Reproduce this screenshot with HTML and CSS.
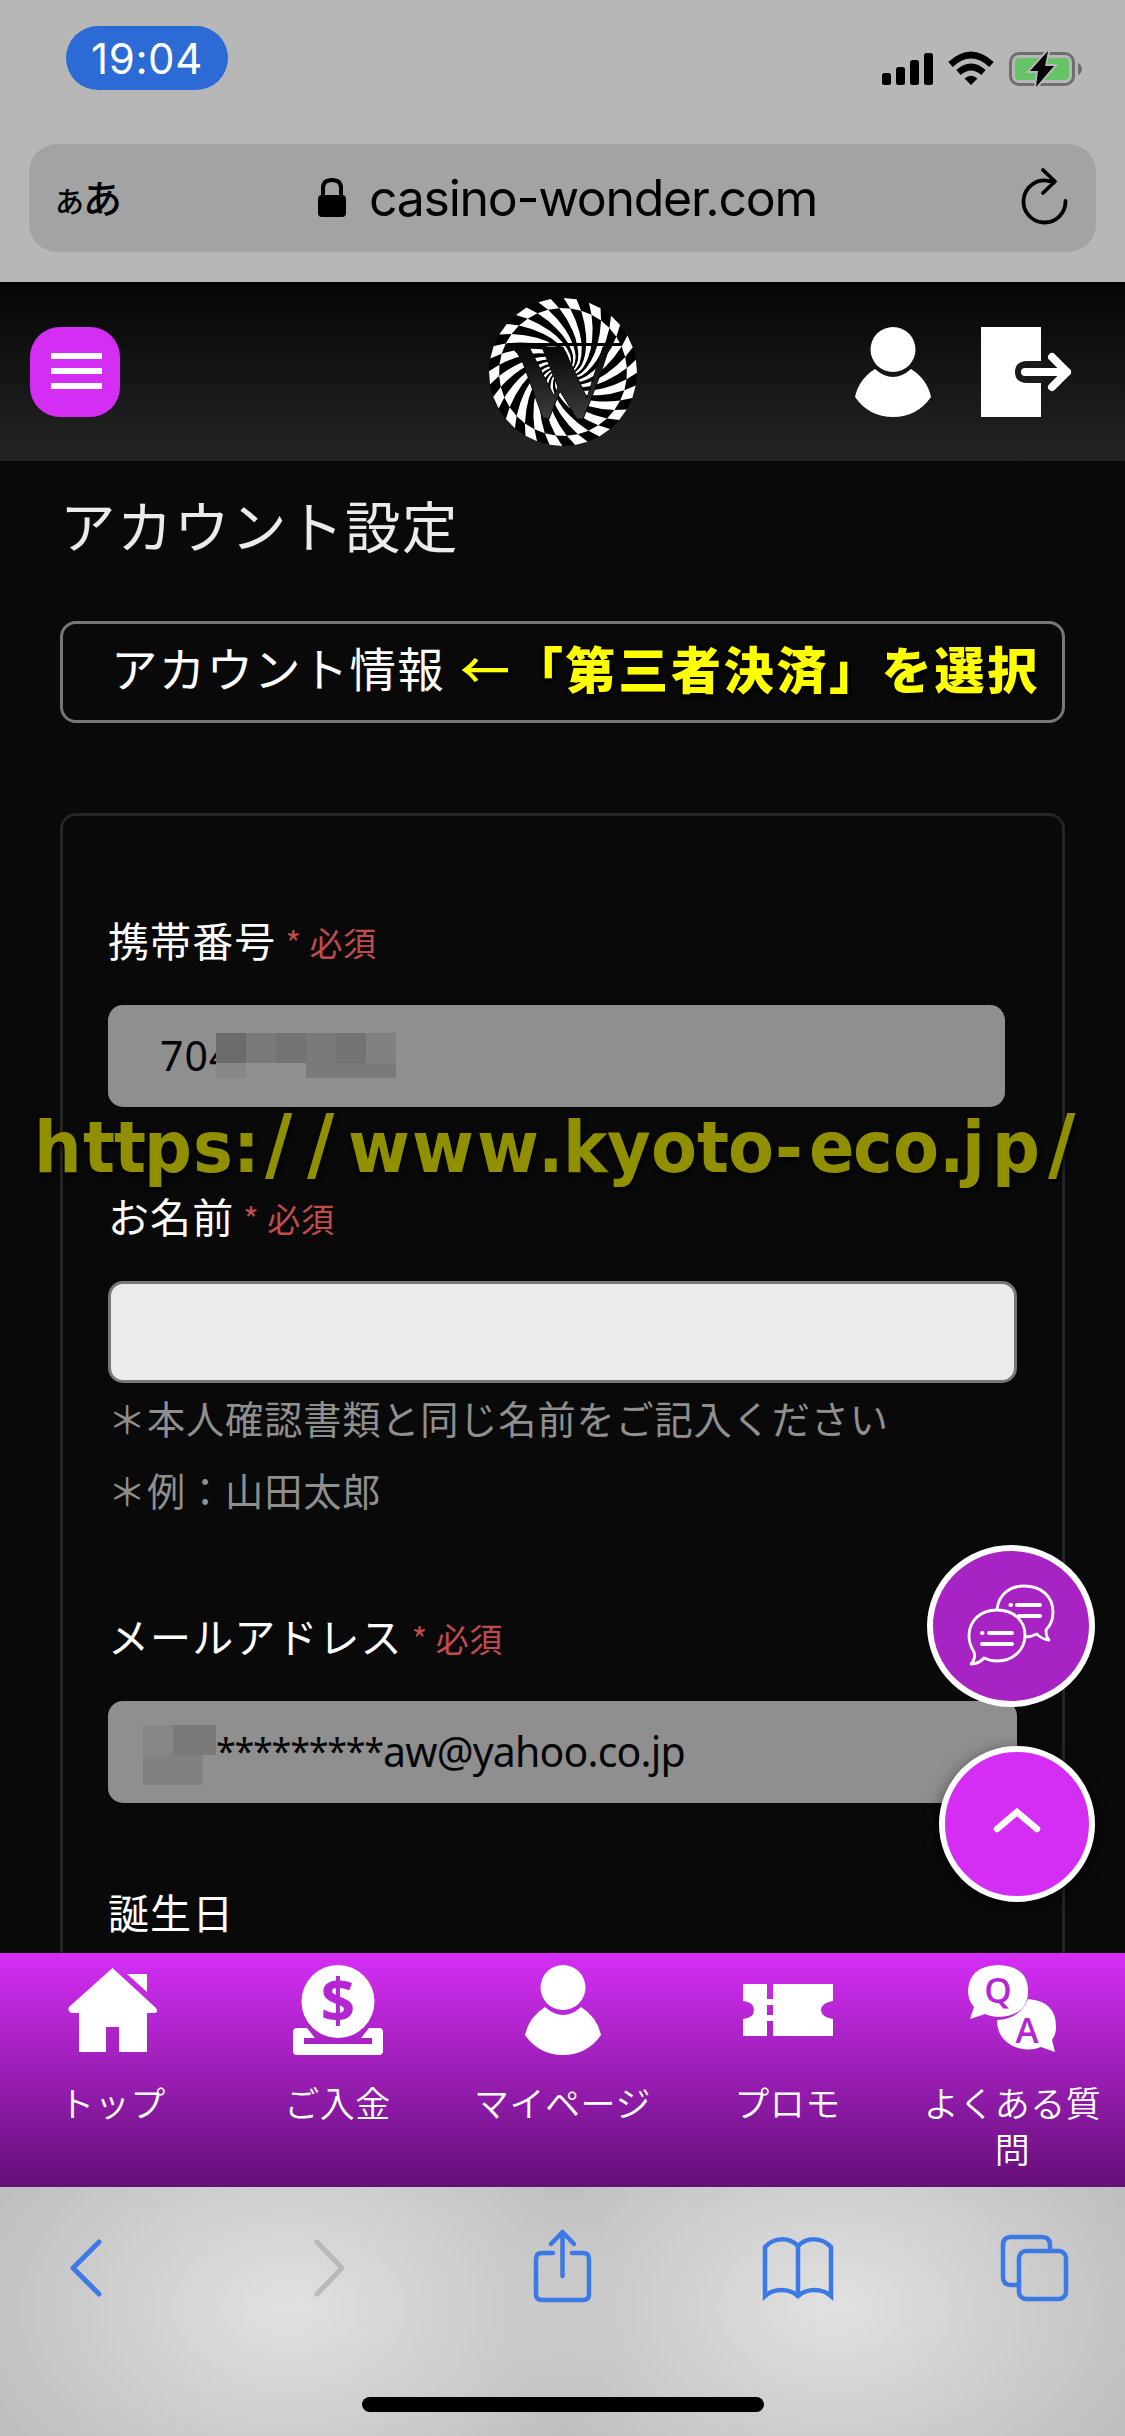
FILE: index.html
```html
<!DOCTYPE html>
<html lang="ja">
<head>
<meta charset="utf-8">
<title>アカウント設定</title>
<link rel="stylesheet" href="styles.css">
</head>
<body>
<div class="screen">
  <div class="browser-top">
    <div class="status">
      <span class="clock">19:04</span>
      <svg class="status-icons" width="202" height="36" viewBox="0 0 202 36">
        <rect x="0" y="21" width="9" height="12" rx="2.5"/><rect x="14" y="15" width="9" height="18" rx="2.5"/><rect x="28" y="8" width="9" height="25" rx="2.5"/><rect x="42" y="1" width="9" height="32" rx="2.5"/>
        <path d="M89 33 L82.500 26.500 Q89 21 95.500 26.500Z"/>
        <path d="M76.500 20.500 Q89 9.500 101.500 20.500" fill="none" stroke="#000" stroke-width="6.500"/>
        <path d="M68.500 12.500 Q89 -6.500 109.500 12.500" fill="none" stroke="#000" stroke-width="6.500"/>
        <rect x="128.500" y="1.500" width="63" height="31" rx="8.500" fill="none" stroke="#6f6f6f" stroke-width="3"/>
        <rect x="133" y="6" width="54" height="22" rx="4.500" fill="#65c466"/>
        <path d="M196 11 Q200 13 200 17 Q200 21 196 23Z" fill="#6f6f6f"/>
        <path d="M166 -1 L148 19 H156 L154 35 L172 14 H163Z" stroke="#b7b7b7" stroke-width="4" paint-order="stroke"/>
      </svg>
    </div>
    <div class="address">
      <span class="reader"><small>あ</small>あ</span>
      <span class="domain">
        <svg width="28" height="40" viewBox="0 0 28 40"><rect x="0" y="17" width="28" height="22" rx="4"/><path d="M5 18 V10 Q5 2 14 2 T23 10 V18" fill="none" stroke="#000" stroke-width="4"/></svg>
        casino-wonder.com
      </span>
      <svg class="reload" width="46" height="56" viewBox="0 0 46 56"><path d="M27 13 A21 21 0 1 0 43.500 33 M21 2 L33 13.500 L21 25 M26 13 H32" fill="none" stroke="#000" stroke-width="3.800" stroke-linecap="round" stroke-linejoin="round"/></svg>
    </div>
  </div>

  <header class="site-header">
    <button class="menu"><i></i><i></i><i></i></button>
    <svg class="logo" width="150" height="150" viewBox="-75 -75 150 150">
      <defs>
        <g id="ray" fill="#fff">
          <path d="M64 0 Q53 7.500 41.300 11.900 Q33 15 25.400 15.900 Q17 17 10.900 15.600 Q3 13 0 8 L-1.400 7.900 Q.7 13.300 8 17.200 Q13.800 19.700 22.300 20.100 Q29.900 20.500 38.600 18.900 Q50.900 16.600 63 11.100Z"/>
          <path d="M63 11.100 L60.100 21.900 L71.800 17.900 L73.800 5.200Z"/>
        </g>
        <linearGradient id="w" x1="0" y1="0" x2="0" y2="1"><stop offset="0" stop-color="#050505"/><stop offset="1" stop-color="#3c3c3c"/></linearGradient>
      </defs>
      <circle r="74"/>
      <g transform="rotate(6.500)">
        <use href="#ray"/><use href="#ray" transform="rotate(20)"/><use href="#ray" transform="rotate(40)"/><use href="#ray" transform="rotate(60)"/><use href="#ray" transform="rotate(80)"/><use href="#ray" transform="rotate(100)"/>
        <use href="#ray" transform="rotate(120)"/><use href="#ray" transform="rotate(140)"/><use href="#ray" transform="rotate(160)"/><use href="#ray" transform="rotate(180)"/><use href="#ray" transform="rotate(200)"/><use href="#ray" transform="rotate(220)"/>
        <use href="#ray" transform="rotate(240)"/><use href="#ray" transform="rotate(260)"/><use href="#ray" transform="rotate(280)"/><use href="#ray" transform="rotate(300)"/><use href="#ray" transform="rotate(320)"/><use href="#ray" transform="rotate(340)"/>
      </g>
      <path d="M-55 -27.500 H58" stroke="#000" stroke-width="3"/>
      <path d="M-53 -26 L-34 -25 L-9 24 L-5 15 L-21 -25 L0 -25 L24 26 L40 -25 L49 -26 L45 -21 Q36 8 20 47 L14 47 L-3 19 L-14 47 L-20 46 L-40 -9 Q-45 -20 -53 -26Z" fill="url(#w)" stroke="#080808" stroke-width="1"/>
    </svg>
    <div class="header-links">
      <svg width="76" height="90" viewBox="0 0 76 90" fill="#fff"><ellipse cx="38" cy="22.500" rx="22.500" ry="22.500"/><path d="M20 42 Q38 58 56 42 Q72 52 76 70 Q62 90 38 90 Q14 90 0 70 Q4 52 20 42Z"/></svg>
      <svg width="90" height="90" viewBox="0 0 90 90"><rect width="60" height="90" fill="#fff"/><path d="M60 34 H47 Q34 34 34 45 Q34 56 47 56 H60Z" fill="#1b1b1b"/><path d="M44 45 H86 M71 30 L86 45 L71 60" fill="none" stroke="#fff" stroke-width="8" stroke-linecap="round" stroke-linejoin="round"/></svg>
    </div>
  </header>

  <main class="content">
    <h1>アカウント設定</h1>
    <div class="section-bar"><span>アカウント情報</span><b class="note"><em>←</em>「第三者決済」を選択</b></div>
    <form class="card">
      <label>携帯番号<span class="req">* 必須</span></label>
      <div class="field phone">704<div class="mosaic mosaic-phone"><i class="a"></i><i class="b"></i><i class="c"></i><i class="b"></i><i class="c"></i><i class="d"></i><i class="e"></i><i></i><i></i><i class="b"></i><i class="b"></i><i class="b"></i></div></div>
      <label>お名前<span class="req">* 必須</span></label>
      <div class="field editable"></div>
      <p class="hint">＊本人確認書類と同じ名前をご記入ください<br>＊例：山田太郎</p>
      <label>メールアドレス<span class="req">* 必須</span></label>
      <div class="field mail"><span class="mosaic mosaic-mail"><i></i><i class="b"></i><i class="d"></i></span><span class="stars">*********</span><span>aw@yahoo.co.jp</span></div>
      <label>誕生日</label>
    </form>
    <svg class="watermark" width="1125" height="110"><text transform="scale(1 1.070)" y="67.300" x="34 83 114 144 193 233 265 307 348 412 477 538 563 607 651 697 728 775 809 853 893 939 962 992 1048">https:<tspan class="slash">//</tspan>www.kyoto-eco.jp<tspan class="slash">/</tspan></text></svg>
  </main>

  <nav class="tabs">
    <a><svg width="90" height="90" viewBox="0 0 90 90" fill="#fff"><path d="M44.500 3 L88 43 Q91 48 86 48 H79 V87 H51 V62 H38 V87 H11 V48 H4 Q-1 47 1 42Z"/><path d="M59 9 H79 V27Z"/></svg>トップ</a>
    <a><svg width="90" height="90" viewBox="0 0 90 90"><path d="M0 67 Q0 63 4 63 H14 L22 73 H11 V79 H79 V73 H68 L76 63 H86 Q90 63 90 67 V86 Q90 90 86 90 H4 Q0 90 0 86Z" fill="#fff"/><circle cx="45" cy="36.500" r="36.500" fill="#fff"/><text class="dollar" x="45" y="57" text-anchor="middle">$</text></svg>ご入金</a>
    <a><svg width="76" height="90" viewBox="0 0 76 90" fill="#fff"><circle cx="38" cy="22.500" r="22.500"/><path d="M20 42 Q38 58 56 42 Q72 52 76 70 Q62 90 38 90 Q14 90 0 70 Q4 52 20 42Z"/></svg>マイページ</a>
    <a><svg width="90" height="90" viewBox="0 0 90 90" fill="#fff"><path fill-rule="evenodd" d="M0 19 H24 V34 H30 V19 H90 V36 Q78 38 78 45 Q78 52 90 54 V71 H30 V56 H24 V71 H0 V54 Q11 53 11 45 Q11 37 0 36Z M24 40 H30 V50 H24Z"/></svg>プロモ</a>
    <a><svg width="90" height="90" viewBox="0 0 90 90"><path d="M60 34 Q88 36 88 62 Q88 70 84 75 L87 87 L73 82 Q58 88 43 80 Q29 72 29 55 Q52 54 60 34Z" fill="#fff"/><path d="M30 0 Q60 1 60 26 Q60 51 30 52 Q23 52 17 49 L2 54 L6 42 Q0 35 0 26 Q1 1 30 0Z" fill="#fff"/><text class="qa" x="30" y="38" text-anchor="middle">Q</text><text class="qa" x="59" y="78" text-anchor="middle">A</text></svg>よくある質問</a>
  </nav>

  <footer class="browser-bottom">
    <svg width="1125" height="249" viewBox="0 0 1125 249" fill="none" stroke="#3b79e5" stroke-width="4.500" stroke-linecap="round" stroke-linejoin="round">
      <path d="M99 55 L73 81 L99 107" stroke-width="5"/><path d="M317 55 L342 81 L317 107" stroke="#b9b9b9" stroke-width="5"/>
      <path d="M553 66 H542 Q536 66 536 72 V107 Q536 113 542 113 H583 Q589 113 589 107 V72 Q589 66 583 66 H572 M562.500 89 V46 M551 57 L562.500 45 L574 57"/>
      <path d="M765 60 C774 50 789 50 798 59 C807 50 822 50 831 60 V109 C822 101 807 101 798 109 C789 101 774 101 765 109Z M798 59 V109" stroke-linejoin="miter"/>
      <path d="M1050 64 V58 Q1050 50 1042 50 H1011 Q1003 50 1003 58 V90 Q1003 98 1011 98 H1017"/><rect x="1019" y="64" width="47" height="48" rx="7"/>
    </svg>
    <i class="home-bar"></i>
  </footer>

  <a class="float chat"><svg width="88" height="84" viewBox="0 0 88 84" fill="none" stroke="#fff" stroke-width="2.800" stroke-linecap="round" stroke-linejoin="round"><path d="M30 25 C32 10 43 2 57 2 C75 2 86 13 86 28 C86 36 83 42 79 46 Q79 53 82 56 Q74 55 70 50 Q64 53 58 53"/><path d="M30 26 C47 26 58 37 58 51 C58 66 46 77 30 77 Q23 77 17 74 Q12 80 4 80 Q9 75 7 68 Q2 60 2 52 C2 37 13 26 30 26Z"/><path d="M43.500 21 H44 M50 21 H73 M52 32 H73 M15 49 H15.500 M22 49 H45 M15 60 H45" stroke-width="4"/></svg></a>
  <a class="float to-top"><svg width="50" height="30" viewBox="0 0 50 30"><path d="M5 24 L25 7 L45 24" fill="none" stroke="#fff" stroke-width="6.500" stroke-linecap="round"/></svg></a>
</div>
</body>
</html>
```
FILE: styles.css
```css
* { box-sizing: border-box; }
body { margin: 0; background: #090909; font-family: "Noto Sans CJK JP", sans-serif; }
.screen { position: relative; width: 1125px; height: 2436px; display: flex; flex-direction: column; overflow: hidden; }
svg { display: block; flex: none; overflow: visible; }

.browser-top { height: 282px; flex: none; background: #b7b7b7; padding: 26px 29px 0; color: #000; font-family: Inter, "Noto Sans CJK JP", sans-serif; }
.status { height: 118px; display: flex; justify-content: space-between; align-items: flex-start; padding: 0 12px 0 37px; }
.clock { width: 162px; height: 64px; border-radius: 32px; background: #2c6ad6; color: #fff; font-size: 42px; line-height: 66px; letter-spacing: .6px; text-align: center; }
.status-icons { margin-top: 26px; }
.address { height: 108px; border-radius: 28px; background: #a3a3a3; display: flex; align-items: center; justify-content: space-between; padding: 0 28px 0 26px; }
.reader { width: 58px; padding-top: 5px; font-size: 39px; line-height: 60px; letter-spacing: -1px; white-space: nowrap; font-weight: 500; }
.reader small { font-size: 29px; }
.domain { display: flex; align-items: center; gap: 23px; font-size: 50px; line-height: 60px; letter-spacing: -1.3px; }
.reload { margin-top: -4px; }

.site-header { height: 179px; flex: none; background: linear-gradient(#050505, #242424); display: grid; grid-template-columns: 1fr auto 1fr; align-items: center; padding: 0 54px 0 30px; }
.menu { width: 90px; height: 90px; border: 0; border-radius: 30px; background: #d42ef5; display: flex; flex-direction: column; align-items: center; justify-content: center; gap: 9px; padding: 0 0 1px 2px; }
.menu i { width: 51px; height: 6px; background: #fff; }
.logo { margin-left: 25px; margin-top: 1px; }
.header-links { display: flex; gap: 50px; justify-self: end; }

.content { position: relative; flex: 1; min-height: 0; overflow: hidden; padding: 23px 60px 0; }
h1 { margin: 0; font-size: 55.500px; line-height: 80px; letter-spacing: 1.5px; font-weight: 400; color: #ebebeb; }
.section-bar { height: 102px; margin-top: 57px; border: 3px solid #777; border-radius: 16px; padding: 0 0 10px 48px; display: flex; align-items: center; font-size: 46.500px; line-height: 60px; letter-spacing: 1.2px; color: #fff; white-space: nowrap; }
.note { display: flex; margin-left: 15px; font-size: 50px; letter-spacing: 2.7px; color: #ff0; font-weight: 800; text-shadow: 0 0 4px #000, 2px 3px 4px #000; }
.note em { width: 53px; font-style: normal; font-weight: 500; }
.card { height: 1300px; margin: 90px 0 0; border: 3px solid #252525; border-radius: 16px; padding: 96px 45px 0; display: flex; flex-direction: column; }
label { height: 93px; flex: none; display: flex; align-items: center; padding-bottom: 40px; font-size: 41px; line-height: 60px; letter-spacing: 1.1px; color: #fff; }
.req { margin-left: 9px; padding-top: 7px; font-size: 33px; letter-spacing: .6px; color: #c24b4e; }
.field { position: relative; height: 102px; flex: none; border: 3px solid #8f8f8f; border-radius: 15px; background: #8f8f8f; color: #050505; font: 41px/96px "Noto Sans", sans-serif; margin-bottom: 81px; white-space: nowrap; }
.phone { width: 897px; padding-left: 49px; line-height: 94px; letter-spacing: 1px; }
.editable { border-color: #777; background: #ebebeb; margin-bottom: 0; }
.mail { display: flex; padding-left: 32px; line-height: 94px; letter-spacing: -.8px; }
.stars { width: 167px; font-size: 36px; letter-spacing: -1.300px; }
.mosaic { display: grid; }
.mosaic i { background: #878787; }
.mosaic .a { background: #6b6b6b; }
.mosaic .b { background: #7a7a7a; }
.mosaic .c { background: #737373; }
.mosaic .d { background: #818181; }
.mosaic-phone { position: absolute; left: 105px; top: 25px; grid-template: 30px 15px / repeat(6, 30px); background: #8f8f8f; }
.mosaic-phone i:not([class]) { background: none; }
.mosaic-mail { width: 73px; margin-top: 21px; grid-template: 30px 30px / 30px 43px; }
.mosaic-mail .d { grid-column: 1 / 3; width: 60px; }
.hint { margin: -1px 0 82px; font-size: 38.200px; line-height: 72px; letter-spacing: .85px; color: #8f8f8f; white-space: nowrap; }
.watermark { position: absolute; left: 0; top: 639px; }
.watermark text { font: bold 67px "DejaVu Sans", sans-serif; fill: #8f8f00; filter: drop-shadow(1px 3px 3px #000); }
.watermark .slash { font-size: 75px; }

.tabs { height: 234px; flex: none; display: grid; grid-template-columns: repeat(5, 225px); background: linear-gradient(#d42ef5, #640f78); }
.tabs a { display: flex; flex-direction: column; align-items: center; gap: 24px; padding: 12px 12px 0; font-size: 35px; line-height: 46px; letter-spacing: .5px; color: #fff; text-align: center; font-weight: 350; }
.dollar { font: bold 60px "Open Sans", sans-serif; fill: #b526d3; letter-spacing: 0; }
.qa { font: 600 35px "Open Sans", sans-serif; fill: #b526d3; letter-spacing: 0; }

.browser-bottom { position: relative; height: 249px; flex: none; background: radial-gradient(ellipse 330px 220px at 290px 120px, #e1e1e1, #e1e1e100), radial-gradient(ellipse 330px 220px at 835px 120px, #e1e1e1, #e1e1e100), #bfbfbf; }
.home-bar { position: absolute; left: 362px; top: 210px; width: 402px; height: 15px; border-radius: 8px; background: #000; }
.float { position: absolute; border: 6px solid #fff; border-radius: 50%; display: flex; align-items: center; justify-content: center; }
.chat { left: 927px; top: 1545px; width: 168px; height: 162px; background: #a823c4; }
.to-top { left: 939px; top: 1746px; width: 156px; height: 156px; background: #d42ef5; box-shadow: 0 4px 16px #0008; padding-bottom: 8px; }
```
